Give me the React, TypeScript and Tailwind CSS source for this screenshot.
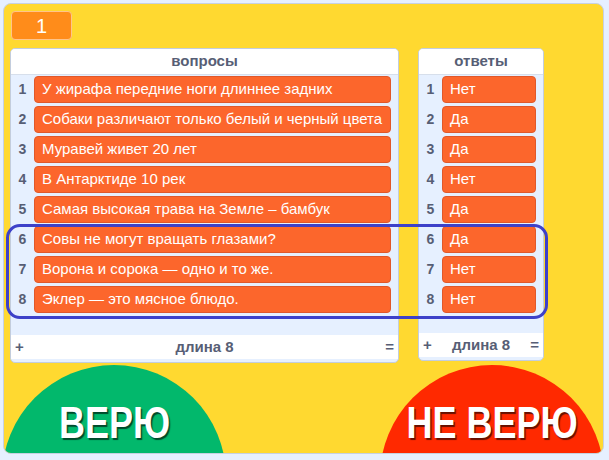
import React from 'react';

const questions = [
  'У жирафа передние ноги длиннее задних',
  'Собаки различают только белый и черный цвета',
  'Муравей живет 20 лет',
  'В Антарктиде 10 рек',
  'Самая высокая трава на Земле – бамбук',
  'Совы не могут вращать глазами?',
  'Ворона и сорока — одно и то же.',
  'Эклер — это мясное блюдо.',
];

const answers = ['Нет', 'Да', 'Да', 'Нет', 'Да', 'Да', 'Нет', 'Нет'];

function ListMonitor({
  title,
  items,
  width,
  height,
}: {
  title: string;
  items: string[];
  width: string;
  height: string;
}) {
  return (
    <div
      className={`${width} ${height} flex flex-col border border-[#c3cddd] rounded-[5px] bg-[#e6f0ff] overflow-hidden`}
    >
      {/* header */}
      <div className="h-[26px] shrink-0 bg-white border-b border-[#d7dfeb] flex items-center justify-center text-[15px] font-bold text-[#575e75]">
        {title}
      </div>

      {/* items */}
      <div className="flex-1 flex flex-col gap-[3px] pt-[1px]">
        {items.map((item, i) => (
          <div key={i} className="flex items-center h-[27px]">
            <div className="w-[23px] shrink-0 text-center text-[14px] font-bold text-[#575e75]">{i + 1}</div>
            <div className="flex-1 mr-[7px] h-[27px] flex items-center px-[7px] bg-[#fc662c] border border-[#e0582a] rounded-[4px] text-white text-[15px] whitespace-nowrap overflow-hidden">
              {item}
            </div>
          </div>
        ))}
      </div>

      {/* footer */}
      <div className="h-[24px] shrink-0 bg-white flex items-center justify-between px-[4px] text-[15px] font-bold text-[#575e75]">
        <span className="w-[12px]">+</span>
        <span>длина {items.length}</span>
        <span className="w-[12px] text-right">=</span>
      </div>
      <div className="h-[3px] shrink-0" />
    </div>
  );
}

function BigLabel({ children }: { children: React.ReactNode }) {
  return (
    <span className="inline-block scale-x-[0.8] text-white text-[45px] leading-none font-bold whitespace-nowrap [text-shadow:2px_2px_1px_rgba(0,0,0,0.6)]">
      {children}
    </span>
  );
}

export default function App() {
  return (
    <div
      className="w-[609px] h-[460px] bg-[#e6f0ff] pt-[3px] pl-[3px]"
      style={{ fontFamily: '"Liberation Sans", Arial, sans-serif' }}
    >
      <div className="relative w-[601px] h-[451px] border border-[#c6d1e2] rounded-lg bg-[#ffd930] overflow-hidden">
        <div className="flex flex-col pt-[7px]">
          {/* variable monitor */}
          <div className="ml-[7px] w-[61px] h-[29px] bg-[#ff8c1a] border border-[#ffc48a] rounded-[4px] flex items-center justify-center text-white text-[20px]">
            1
          </div>

          {/* lists */}
          <div className="flex items-start mt-[8px] ml-[6px] gap-[19px]">
            <ListMonitor title="вопросы" items={questions} width="w-[389px]" height="h-[315px]" />
            <ListMonitor title="ответы" items={answers} width="w-[126px]" height="h-[313px]" />
          </div>
        </div>

        {/* highlight frame */}
        <div className="absolute left-[2px] top-[220px] w-[542px] h-[95px] border-[3px] border-[#3d41c9] rounded-[14px]" />

        {/* buttons */}
        <div className="absolute left-[-2px] top-[361px] w-[224px] h-[224px] rounded-full bg-[#02b86c] pt-[35px] flex justify-center items-start">
          <BigLabel>ВЕРЮ</BigLabel>
        </div>
        <div className="absolute left-[376px] top-[361px] w-[224px] h-[224px] rounded-full bg-[#ff2900] pt-[35px] flex justify-center items-start">
          <BigLabel>НЕ ВЕРЮ</BigLabel>
        </div>
      </div>
    </div>
  );
}
